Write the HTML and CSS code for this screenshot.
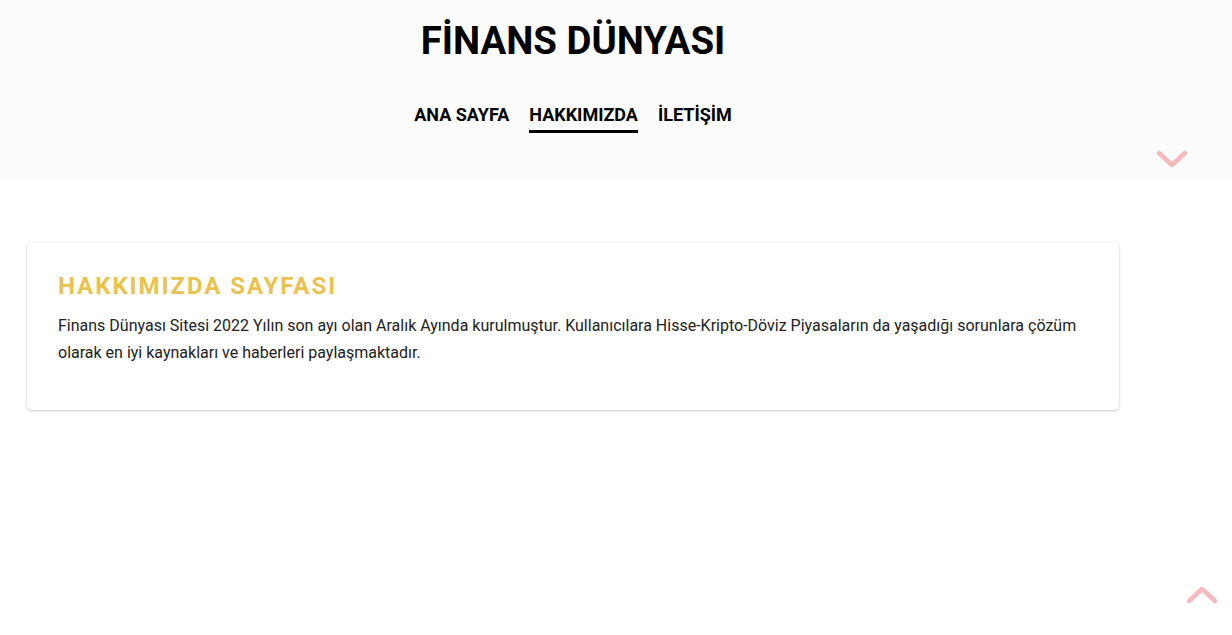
FILE: index.html
```html
<!DOCTYPE html>
<html lang="tr">
<head>
<meta charset="utf-8">
<title>Finans Dünyası - Hakkımızda</title>
<link rel="stylesheet" href="styles.css">
</head>
<body>
<header class="site-header">
  <div class="header-inner">
    <h1 class="site-title">FİNANS DÜNYASI</h1>
    <nav class="main-nav">
      <a href="#" class="nav-link">ANA SAYFA</a>
      <a href="#" class="nav-link active">HAKKIMIZDA</a>
      <a href="#" class="nav-link">İLETİŞİM</a>
    </nav>
  </div>
  <button class="chevron chevron-down" aria-label="Aşağı">
    <svg width="34" height="22" viewBox="0 0 34 22"><path d="M4 4 L17 16 L30 4" fill="none" stroke="#f7b9b9" stroke-width="4.5" stroke-linecap="round" stroke-linejoin="round"/></svg>
  </button>
</header>
<main class="content">
  <section class="card">
    <h2 class="card-title">HAKKIMIZDA SAYFASI</h2>
    <p class="card-text">Finans Dünyası Sitesi 2022 Yılın son ayı olan Aralık Ayında kurulmuştur. Kullanıcılara Hisse-Kripto-Döviz Piyasaların da yaşadığı sorunlara çözüm olarak en iyi kaynakları ve haberleri paylaşmaktadır.</p>
  </section>
</main>
<button class="chevron chevron-up" aria-label="Yukarı">
  <svg width="34" height="22" viewBox="0 0 34 22"><path d="M4 18 L17 6 L30 18" fill="none" stroke="#f7b9b9" stroke-width="4.5" stroke-linecap="round" stroke-linejoin="round"/></svg>
</button>
</body>
</html>
```
FILE: styles.css
```css
* { box-sizing: border-box; }
html, body { margin: 0; padding: 0; }
body {
  font-family: Roboto, "Noto Sans", sans-serif;
  background: #ffffff;
  color: #222222;
  position: relative;
  min-height: 635px;
}
.site-header {
  position: relative;
  background: #fcfcfc;
  height: 181px;
  padding-top: 18px;
}
.header-inner {
  width: 1146px;
  display: flex;
  flex-direction: column;
  align-items: center;
}
.site-title {
  margin: 0;
  font-size: 38.4px;
  font-weight: 700;
  color: #000;
  line-height: 45px;
}
.main-nav {
  margin-top: 41px;
  display: flex;
  gap: 20px;
}
.nav-link {
  color: #000;
  text-decoration: none;
  font-weight: 700;
  font-size: 18px;
  line-height: 21px;
  padding-bottom: 5px;
  border-bottom: 3px solid transparent;
}
.nav-link.active { border-bottom-color: #000; }
.chevron {
  position: absolute;
  background: none;
  border: 0;
  padding: 0;
  line-height: 0;
  cursor: pointer;
}
.chevron-down { left: 1155px; top: 149px; }
.chevron-up { left: 1185px; top: 583px; }
.content {
  padding: 62px 113px 0 27px;
}
.card {
  background: #fff;
  border-radius: 5px;
  box-shadow: 0 1px 3px rgba(0,0,0,0.22), 0 0 2px rgba(0,0,0,0.06);
  padding: 29px 31px 28px 31px;
}
.card-title {
  margin: 0;
  color: #ecc24e;
  font-size: 24px;
  font-weight: 700;
  letter-spacing: 1.95px;
  line-height: 28px;
}
.card-text {
  margin: 12px 0 16px;
  font-size: 16px;
  line-height: 27px;
  color: #222;
}
```
